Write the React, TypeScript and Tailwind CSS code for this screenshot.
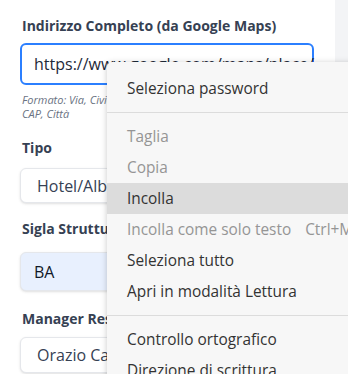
export default function App() {
  const font = { fontFamily: '"Open Sans", "Noto Sans", sans-serif' };
  return (
    <div className="relative flex h-[374px] w-[348px] overflow-hidden bg-gray-100" style={font}>
      <div className="flex w-[335px] flex-col bg-white px-5 pt-[15px]">
        <label className="mb-[6px] pl-[2px] text-[14px] font-bold leading-[22px] text-gray-700">
          Indirizzo Completo (da Google Maps)
        </label>
        <div className="flex h-[42px] w-[294px] items-center rounded-md border-2 border-blue-500 px-[12px] text-[16px] text-gray-800">
          https://www.google.com/maps/place/
        </div>
        <p className="mt-[8px] pl-[2px] text-[11px] italic leading-[14px] text-gray-500">
          Formato: Via, Civico, CAP, Città
          <br />
          CAP, Città
        </p>
        <label className="mt-[16px] pl-[2px] text-[14px] font-bold leading-[22px] text-gray-700">Tipo</label>
        <div className="mt-[9px] flex h-[35px] w-[294px] items-center rounded-md border border-gray-200 bg-white px-[16px] text-[16px] text-gray-700 shadow-sm">
          Hotel/Albergo
        </div>
        <label className="mt-[15px] pl-[2px] text-[14px] font-bold leading-[22px] text-gray-700">
          Sigla Struttura
        </label>
        <div className="mt-[12px] flex h-[39px] w-[294px] items-center rounded-md border border-gray-200 bg-[#e8f0fe] px-[13px] text-[16px] text-gray-900 shadow-sm">
          BA
        </div>
        <label className="mt-[17px] pl-[2px] text-[14px] font-bold leading-[22px] text-gray-700">
          Manager Responsabile
        </label>
        <div className="mt-[7px] flex h-[36px] w-[294px] items-center rounded-md border border-gray-200 bg-white px-[16px] text-[16px] text-gray-700 shadow-sm">
          Orazio Carella
        </div>
      </div>
      <div className="flex-1" />

      <div className="absolute left-[107px] top-[62px] w-[260px] rounded-tl-[5px] bg-[#f7f7f7] py-[11px] text-[15.4px] text-[#333333] shadow-[0_1px_6px_rgba(0,0,0,0.22)]">
        <div className="flex h-[31px] items-center px-5">Seleziona password</div>
        <div className="my-[8px] h-px bg-[#dcdcdc]" />
        <div className="flex h-[31px] items-center px-5 text-[#959595]">Taglia</div>
        <div className="flex h-[31px] items-center px-5 text-[#959595]">Copia</div>
        <div className="flex h-[31px] items-center bg-[#dcdcdc] px-5">Incolla</div>
        <div className="flex h-[31px] items-center gap-[14px] whitespace-nowrap px-5 text-[#959595]">
          <span>Incolla come solo testo</span>
          <span>Ctrl+Maiusc+V</span>
        </div>
        <div className="flex h-[31px] items-center px-5">Seleziona tutto</div>
        <div className="flex h-[31px] items-center px-5">Apri in modalità Lettura</div>
        <div className="my-[8px] h-px bg-[#dcdcdc]" />
        <div className="flex h-[31px] items-center px-5">Controllo ortografico</div>
        <div className="flex h-[31px] items-center px-5">Direzione di scrittura</div>
      </div>
    </div>
  );
}
